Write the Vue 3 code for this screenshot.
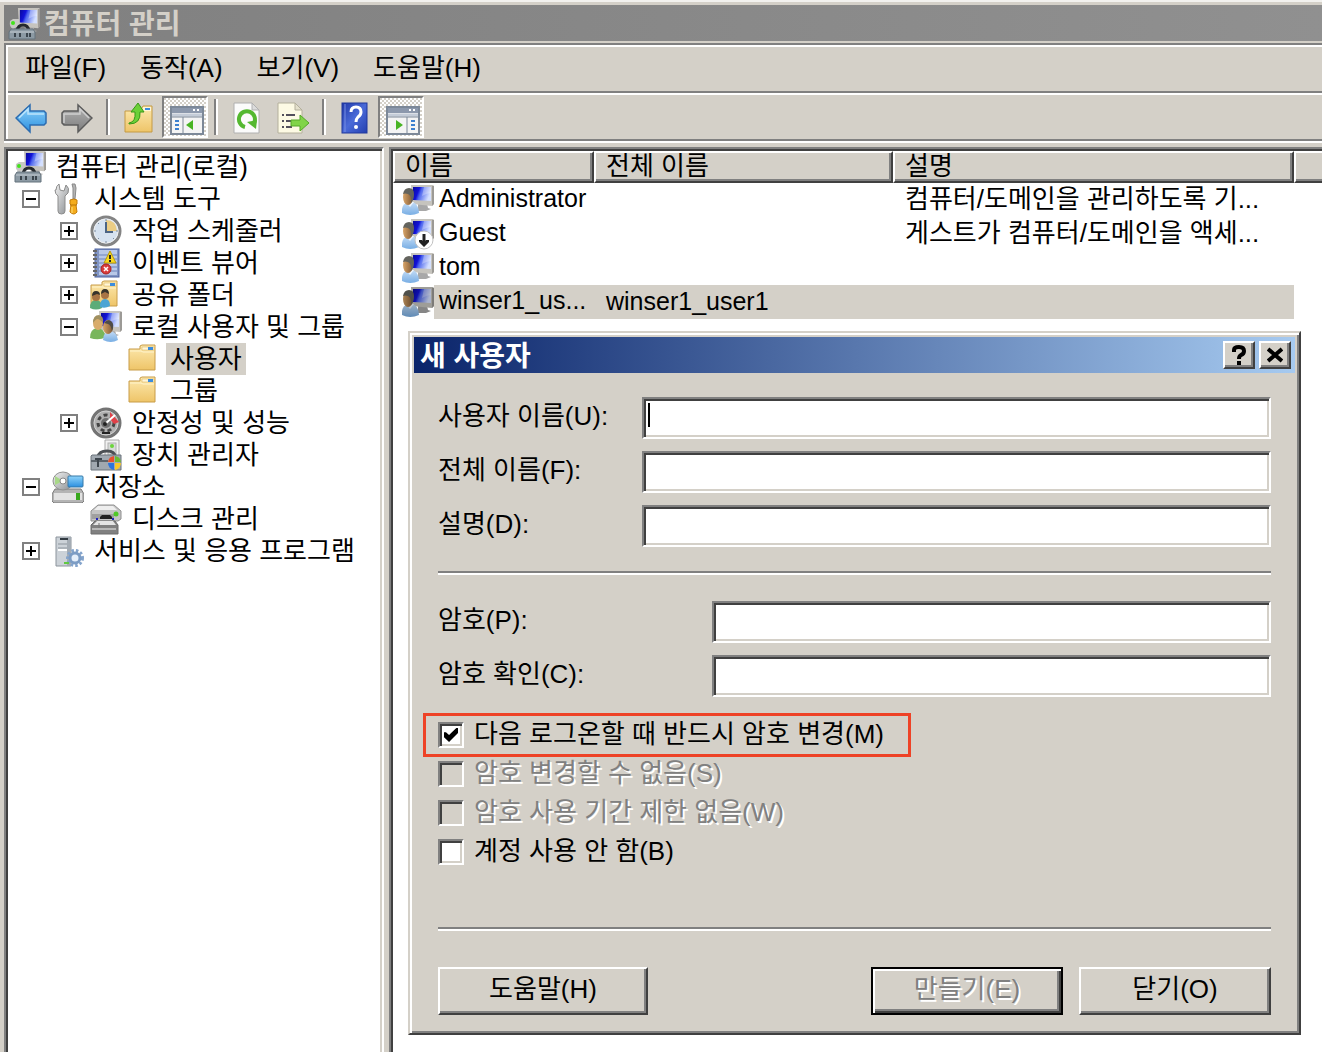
<script setup>
import { ref } from 'vue'

const menus = ['파일(F)', '동작(A)', '보기(V)', '도움말(H)']

const tools = [
  { icon: 'back', label: '뒤로' },
  { icon: 'forward', label: '앞으로' },
  { separator: true },
  { icon: 'up', label: '한 수준 위로' },
  { icon: 'tree-pane', label: '콘솔 트리 표시/숨기기', pressed: true },
  { separator: true },
  { icon: 'refresh', label: '새로 고침' },
  { icon: 'export', label: '목록 내보내기' },
  { separator: true },
  { icon: 'help', label: '도움말' },
  { icon: 'action-pane', label: '작업 창 표시/숨기기', pressed: true },
]

const tree = [
  { depth: 0, icon: 'computer', text: '컴퓨터 관리(로컬)' },
  { depth: 1, icon: 'tools', text: '시스템 도구', box: 'minus' },
  { depth: 2, icon: 'clock', text: '작업 스케줄러', box: 'plus' },
  { depth: 2, icon: 'events', text: '이벤트 뷰어', box: 'plus' },
  { depth: 2, icon: 'shared', text: '공유 폴더', box: 'plus' },
  { depth: 2, icon: 'group', text: '로컬 사용자 및 그룹', box: 'minus' },
  { depth: 3, icon: 'folder', text: '사용자', selected: true },
  { depth: 3, icon: 'folder', text: '그룹' },
  { depth: 2, icon: 'gauge', text: '안정성 및 성능', box: 'plus' },
  { depth: 2, icon: 'device', text: '장치 관리자' },
  { depth: 1, icon: 'storage', text: '저장소', box: 'minus' },
  { depth: 2, icon: 'disk', text: '디스크 관리' },
  { depth: 1, icon: 'services', text: '서비스 및 응용 프로그램', box: 'plus' },
]

const users = [
  { name: 'Administrator', full: '', desc: '컴퓨터/도메인을 관리하도록 기...', icon: 'user' },
  { name: 'Guest', full: '', desc: '게스트가 컴퓨터/도메인을 액세...', icon: 'user-off' },
  { name: 'tom', full: '', desc: '', icon: 'user' },
  { name: 'winser1_us...', full: 'winser1_user1', desc: '', icon: 'user', selected: true },
]

const identity = [
  { id: 'user-name', label: '사용자 이름(U):', focused: true },
  { id: 'full-name', label: '전체 이름(F):' },
  { id: 'description', label: '설명(D):' },
]
const passwords = [
  { id: 'password', label: '암호(P):' },
  { id: 'confirm', label: '암호 확인(C):' },
]
const options = ref([
  { id: 'must-change', label: '다음 로그온할 때 반드시 암호 변경(M)', checked: true, marked: true },
  { id: 'cannot-change', label: '암호 변경할 수 없음(S)', checked: false, disabled: true },
  { id: 'never-expires', label: '암호 사용 기간 제한 없음(W)', checked: false, disabled: true },
  { id: 'account-off', label: '계정 사용 안 함(B)', checked: false },
])
</script>

<template>
  <svg class="sprite" aria-hidden="true">
    <defs>
      <linearGradient id="g-screen" x1="0" y1="0" x2="1" y2="0.3">
        <stop offset="0" stop-color="#0a0a9c" /><stop offset="0.35" stop-color="#1212d8" />
        <stop offset="0.5" stop-color="#5068ee" /><stop offset="1" stop-color="#d4e0ff" />
      </linearGradient>
      <linearGradient id="g-folder" x1="0" y1="0" x2="0" y2="1">
        <stop offset="0" stop-color="#fdeab0" /><stop offset="1" stop-color="#eec468" />
      </linearGradient>
      <linearGradient id="g-blue" x1="0" y1="0" x2="0" y2="1">
        <stop offset="0" stop-color="#8fd4fa" /><stop offset="1" stop-color="#2c8fe0" />
      </linearGradient>
      <linearGradient id="g-gray" x1="0" y1="0" x2="0" y2="1">
        <stop offset="0" stop-color="#b4b4b4" /><stop offset="1" stop-color="#7c7c7c" />
      </linearGradient>
      <linearGradient id="g-metal" x1="0" y1="0" x2="1" y2="1">
        <stop offset="0" stop-color="#f2f2f2" /><stop offset="1" stop-color="#8a8e92" />
      </linearGradient>
      <linearGradient id="g-help" x1="0" y1="0" x2="1" y2="1">
        <stop offset="0" stop-color="#2038a8" /><stop offset="0.5" stop-color="#4a6ad8" /><stop offset="1" stop-color="#2440b0" />
      </linearGradient>
      <linearGradient id="g-shirt" x1="0" y1="0" x2="0" y2="1">
        <stop offset="0" stop-color="#c4dcf6" /><stop offset="1" stop-color="#78aee4" />
      </linearGradient>
      <linearGradient id="g-head" x1="0" y1="0" x2="1" y2="0">
        <stop offset="0" stop-color="#d8a468" /><stop offset="1" stop-color="#7e5834" />
      </linearGradient>
    </defs>

    <symbol id="i-monitor" viewBox="0 0 24 28">
      <path d="M8 19h9l1 4 3 1-5 2H6l2-2z" fill="#a8a8a8" />
      <path d="M1 0h22l1 1v18l-2 2-20-2z" fill="#c6c4be" />
      <path d="M22 1l2 0v18l-2 2z" fill="#9c9a96" />
      <path d="M3 2h18v14l-18-1z" fill="url(#g-screen)" />
      <path d="M14 2h7v6q-4 0-9 3z" fill="#fff" opacity=".3" />
    </symbol>
    <symbol id="i-computer" viewBox="0 0 32 32">
      <svg x="9" y="0" width="23" height="27"><use href="#i-monitor" /></svg>
      <path d="M2 13q-1 6 3 8l6-3V11H5z" fill="#c8c8c4" />
      <circle cx="5" cy="15" r="2" fill="#42e21c" />
      <path d="M9 23q1-6 6-6t6 6" fill="none" stroke="#25292d" stroke-width="3" />
      <path d="M3 21h22l2 3v7H1v-7z" fill="#8c9aa4" stroke="#65727c" />
      <path d="M2 24h24" stroke="#c4ccd2" stroke-width="1" />
      <path d="M7 25v4M12 25v4M19 25v4M22 25v4" stroke="#3b454d" stroke-width="2" />
    </symbol>
    <symbol id="i-user" viewBox="0 0 32 32">
      <svg x="8" y="1" width="24" height="28"><use href="#i-monitor" /></svg>
      <path d="M0 29q-1-9 6-11h5q6 3 6 11-9 4-17 0z" fill="url(#g-shirt)" />
      <path d="M4 18l4 5 4-5z" fill="#eef5fc" />
      <ellipse cx="6" cy="13" rx="5" ry="8" fill="url(#g-head)" />
      <path d="M1 10q1-6 6-6 5 0 5 6 0 6-3 9 1-7-3-9-3-1-5 0z" fill="#64645e" />
    </symbol>
    <symbol id="i-user-off" viewBox="0 0 32 32">
      <use href="#i-user" />
      <circle cx="22" cy="22" r="9" fill="#fff" stroke="#c2c2c2" />
      <path d="M22 16v8" stroke="#222" stroke-width="3" />
      <path d="M17 22h3l2 2 2-2h3v2l-5 5-5-5z" fill="#222" />
    </symbol>
    <symbol id="i-group" viewBox="0 0 32 32">
      <svg x="8" y="0" width="24" height="28"><use href="#i-monitor" /></svg>
      <path d="M0 27q0-9 7-10 7 0 9 9-7 4-16 1z" fill="#78b65c" />
      <ellipse cx="8" cy="12" rx="5" ry="7" fill="#d8ac6c" />
      <path d="M3 12q0-8 6-8 5 1 4 8-3-4-6-4-2 1-4 4z" fill="#a09060" />
      <path d="M13 29q0-8 7-9 7 1 8 9-7 4-15 0z" fill="url(#g-shirt)" />
      <ellipse cx="18" cy="16" rx="5" ry="7" fill="url(#g-head)" />
      <path d="M14 12q3-4 7-2 4 3 1 10-1-6-4-7z" fill="#4e4c48" />
    </symbol>
    <symbol id="i-tools" viewBox="0 0 32 32">
      <path d="M4 7q0-4 3-6l1 6 4 1 2-6q4 3 2 8l-3 3v15q0 3-3.500 3t-3.500-3V13q-3-2-3-6z" fill="url(#g-metal)" stroke="#8c8c8c" />
      <path d="M20 1h3l1 4-1 11h-2V5z" fill="#b4b4b4" stroke="#888" />
      <path d="M18 17q4-2 7 0v4l-1 1 1 7q-3 4-7 0l1-7-1-1z" fill="#f4ac1c" stroke="#c47c08" />
      <path d="M18 22h7" stroke="#b87408" />
      <path d="M20 24v6" stroke="#ffe07c" stroke-width="1" />
    </symbol>
    <symbol id="i-clock" viewBox="0 0 32 32">
      <circle cx="16" cy="16" r="14" fill="#d6e2f0" stroke="#848484" stroke-width="3" />
      <circle cx="16" cy="16" r="12" fill="none" stroke="#eee" stroke-width="1" />
      <path d="M16 16V5q10 0 11 11z" fill="#eccd84" />
      <path d="M16 7v10h7" fill="none" stroke="#4c6484" stroke-width="2" />
      <path d="M16 4v2M16 26v2M4 16h2M26 16h2M8 8l1 1M24 24l-1-1M8 24l1-1" stroke="#7c8ca0" stroke-width="1" />
    </symbol>
    <symbol id="i-events" viewBox="0 0 32 32">
      <rect x="5" y="2" width="24" height="28" fill="#8094c4" stroke="#4c62a0" />
      <path d="M9 3h18v25H9z" fill="#b8c8e8" />
      <path d="M9 8h18M9 12h18M9 16h18M9 20h18M9 24h18" stroke="#6c84bc" stroke-width="1" />
      <path d="M3 4h4M3 8h4M3 12h4M3 16h4M3 20h4M3 24h4M3 28h4" stroke="#666" stroke-width="2" />
      <path d="M20 4l6 12H14z" fill="#f8d820" stroke="#b89808" />
      <path d="M20 8v4M20 13v2" stroke="#222" stroke-width="2" />
      <circle cx="16" cy="22" r="5" fill="#d83c3c" stroke="#a82020" />
      <path d="M14 20l4 4M18 20l-4 4" stroke="#fff" stroke-width="1.500" />
    </symbol>
    <symbol id="i-folder" viewBox="0 0 32 32">
      <path d="M1 6h11V3l2-1h13v25H1z" fill="url(#g-folder)" stroke="#c89c48" />
      <path d="M14 4h12v3H14z" fill="#fff6d8" stroke="#d4ac58" stroke-width=".5" />
      <path d="M20 4h5v3h-5z" fill="#3c8cdc" />
      <path d="M2 8h11l2 1h11" fill="none" stroke="#fff4cc" />
    </symbol>
    <symbol id="i-shared" viewBox="0 0 32 32">
      <use href="#i-folder" />
      <path d="M0 29q0-8 6-8t6 8q-6 3-12 0z" fill="#5cac78" />
      <path d="M10 28q0-8 5-8t5 7q-5 3-10 1z" fill="#4ca4d4" />
      <circle cx="6" cy="18" r="4" fill="#a87444" />
      <circle cx="15" cy="16" r="4" fill="#a87444" />
      <path d="M2 17q0-5 4-5t4 4l-3-1zM11 15q0-5 4-5t4 5l-4-2z" fill="#38342c" />
    </symbol>
    <symbol id="i-gauge" viewBox="0 0 32 32">
      <circle cx="16" cy="16" r="14" fill="#8c8c8c" stroke="#747474" stroke-width="3" />
      <circle cx="16" cy="16" r="12" fill="#b0b0b0" stroke="#d0d0d0" stroke-width="1" />
      <circle cx="16" cy="16" r="8" fill="none" stroke="#444" stroke-width="3" stroke-dasharray="4 3" />
      <path d="M20 5l9 10-5 2-4-5z" fill="#e04048" />
      <circle cx="16" cy="16" r="5" fill="#707070" />
      <path d="M15 17L25 8" stroke="#fff" stroke-width="2" />
      <circle cx="15" cy="17" r="2" fill="#222" />
      <path d="M12 26h8" stroke="#222" stroke-width="2" />
    </symbol>
    <symbol id="i-device" viewBox="0 0 32 32">
      <path d="M15 1h14v18H15z" fill="#f2f2f2" stroke="#a8a8a8" />
      <rect x="18" y="4" width="8" height="12" fill="#d8dcd8" stroke="#b0b0b0" />
      <circle cx="22" cy="7" r="2" fill="#6cd43c" />
      <path d="M8 18q1-6 9-6t8 6" fill="none" stroke="#4c5054" stroke-width="3" />
      <path d="M2 16h29v15H1V17z" fill="#a0a8b0" stroke="#6c747c" />
      <path d="M1 22h17" stroke="#5c646c" stroke-width="2" />
      <path d="M8 20v8M5 20h7" stroke="#3c444c" stroke-width="2" />
      <path d="M18 23a7 7 0 0 1 6-6v6z" fill="#e8502c" />
      <path d="M25 17a7 7 0 0 1 6 6h-6z" fill="#6cbc30" />
      <path d="M18 24h6v7a7 7 0 0 1-6-7z" fill="#2c74dc" />
      <path d="M25 24h6a7 7 0 0 1-6 7z" fill="#f8c828" />
    </symbol>
    <symbol id="i-storage" viewBox="0 0 32 32">
      <path d="M3 18h26l3 5v7l-2 2H2l-2-2v-7z" fill="#b4b4b4" stroke="#7c7c7c" />
      <path d="M2 22h28v7H2z" fill="#e2e2e2" />
      <path d="M24 22h4v7h-4z" fill="#38a81c" />
      <ellipse cx="11" cy="10" rx="10" ry="9" fill="url(#g-metal)" stroke="#909090" />
      <path d="M3 5l8 5-8 4z" fill="#a8d888" />
      <circle cx="11" cy="10" r="3" fill="#fff" stroke="#888" />
      <rect x="16" y="5" width="15" height="11" rx="1" fill="url(#g-blue)" stroke="#3478a8" />
    </symbol>
    <symbol id="i-disk" viewBox="0 0 32 32">
      <path d="M1 8l7-6h16l7 6v8l-3 2H1z" fill="#c4c4c4" stroke="#909090" />
      <path d="M8 3h15l4 4H4z" fill="#eee" />
      <path d="M2 11h22v5H2z" fill="#a0a0a0" />
      <path d="M10 14l2-2h8l2 2v2H10z" fill="#222" />
      <circle cx="26" cy="11" r="2.500" fill="#50c828" />
      <path d="M7 15v2M23 15v2" stroke="#2020c0" stroke-width="2" />
      <path d="M5 18h20l3 4v9H1v-9z" fill="#808080" stroke="#6c6c6c" />
      <path d="M7 18h16l3 4H3z" fill="#e4e4e4" />
      <path d="M2 26h24" stroke="#b8b8b8" stroke-width="2" />
      <path d="M9 20v5" stroke="#777" stroke-width="1" />
    </symbol>
    <symbol id="i-services" viewBox="0 0 32 32">
      <path d="M4 2h15v29H4z" fill="#ccd2d8" stroke="#8c949c" />
      <path d="M15 2h4v29h-4z" fill="#a4acb4" />
      <path d="M8 4h8" stroke="#333b43" stroke-width="2" />
      <path d="M6 9h9M6 13h9" stroke="#8c949c" stroke-width="1" />
      <path d="M6 15h9" stroke="#fff" stroke-width="2" />
      <circle cx="23" cy="23" r="7.500" fill="none" stroke="#84a4cc" stroke-width="3" stroke-dasharray="2.500 2" />
      <circle cx="23" cy="23" r="5" fill="#e4eefa" stroke="#7c9cc4" stroke-width="3" />
      <path d="M12 28h5" stroke="#60c840" stroke-width="2" />
    </symbol>

    <symbol id="i-back" viewBox="0 0 32 32">
      <path d="M1 16L15 3v6h14l2 2v10l-2 2H15v7z" fill="url(#g-blue)" stroke="#2c6cb0" stroke-width="1.500" />
      <path d="M4 16l9-9v5h16" fill="none" stroke="#bce4fc" stroke-width="1.500" />
    </symbol>
    <symbol id="i-forward" viewBox="0 0 32 32">
      <path d="M31 16L17 3v6H3l-2 2v10l2 2h14v7z" fill="url(#g-gray)" stroke="#5c5c5c" stroke-width="1.500" />
      <path d="M3 21v-9h16V7l9 9" fill="none" stroke="#cfcfcf" stroke-width="1.500" />
    </symbol>
    <symbol id="i-up" viewBox="0 0 32 32">
      <path d="M2 9h15l3-5h9v26H2z" fill="url(#g-folder)" stroke="#c49a44" />
      <path d="M20 5h8v4h-8z" fill="#fff6d8" />
      <path d="M22 6h5v2h-5z" fill="#3c8cdc" />
      <path d="M6 21q7-1 6-11H8l7-9 6 9h-4q1 12-11 12z" fill="#6cd038" stroke="#389818" />
    </symbol>
    <symbol id="i-tree-pane" viewBox="0 0 36 30">
      <rect x="1" y="2" width="32" height="27" fill="#f4f4f4" stroke="#7c8898" stroke-width="2" />
      <path d="M2 3h30v5H2z" fill="#8c98ac" />
      <path d="M23 5h2M27 5h2" stroke="#fff" stroke-width="2" />
      <path d="M2 10h30" stroke="#c4ccd8" stroke-width="3" />
      <path d="M13 12v16M2 12h30" stroke="#7c8898" stroke-width="1" />
      <path d="M5 16h4M5 20h4M5 24h4" stroke="#3c80d0" stroke-width="2" />
      <path d="M23 15v10l-7-5z" fill="#48b424" />
    </symbol>
    <symbol id="i-action-pane" viewBox="0 0 36 30">
      <rect x="1" y="2" width="32" height="27" fill="#f4f4f4" stroke="#7c8898" stroke-width="2" />
      <path d="M2 3h30v5H2z" fill="#8c98ac" />
      <path d="M23 5h2M27 5h2" stroke="#fff" stroke-width="2" />
      <path d="M2 10h30" stroke="#c4ccd8" stroke-width="3" />
      <path d="M21 12v16M2 12h30" stroke="#7c8898" stroke-width="1" />
      <path d="M25 16h4M25 20h4M25 24h4" stroke="#3c80d0" stroke-width="2" />
      <path d="M10 15v10l7-5z" fill="#48b424" />
    </symbol>
    <symbol id="i-refresh" viewBox="0 0 32 32">
      <path d="M3 1h18l7 7v23H3z" fill="#fbfbfb" stroke="#b0b0b0" />
      <path d="M21 1v7h7z" fill="#dcdcdc" stroke="#b0b0b0" />
      <path d="M14 25a8 8 0 1 1 9-4" fill="none" stroke="#54b830" stroke-width="4" />
      <path d="M16 20l10-2-1 9z" fill="#54b830" />
    </symbol>
    <symbol id="i-export" viewBox="0 0 32 32">
      <path d="M1 1h17l7 7v23H1z" fill="#fdfae4" stroke="#b4b09c" />
      <path d="M18 1v7h7z" fill="#e4e0cc" stroke="#b4b09c" />
      <path d="M5 13h2M5 19h2M5 25h2M9 13h9M9 19h6M9 25h6" stroke="#54505c" stroke-width="2" />
      <path d="M14 18h9v-5l9 8-9 8v-5h-9z" fill="#80d448" stroke="#54a828" />
    </symbol>
    <symbol id="i-help" viewBox="0 0 32 32">
      <rect x="3" y="1" width="25" height="30" fill="url(#g-help)" stroke="#20389c" />
      <path d="M6 2v28" stroke="#7890e4" stroke-width="1" />
      <path d="M12 10q0-5 5-5t5 5q0 3-3 5-2 2-2 5" fill="none" stroke="#fff" stroke-width="3" />
      <circle cx="17" cy="25" r="2" fill="#fff" />
    </symbol>
  </svg>

  <div class="window">
    <header class="titlebar">
      <svg class="icon"><use href="#i-computer" /></svg>
      <h1>컴퓨터 관리</h1>
    </header>

    <div class="bars">
      <nav class="menubar">
        <button v-for="m in menus" :key="m" type="button">{{ m }}</button>
      </nav>
      <div class="toolbar">
        <template v-for="(t, i) in tools" :key="i">
          <span v-if="t.separator" class="sep"></span>
          <button v-else type="button" :class="{ pressed: t.pressed }" :aria-label="t.label">
            <svg class="icon" :class="{ wide: t.pressed }"><use :href="'#i-' + t.icon" /></svg>
          </button>
        </template>
      </div>
    </div>

    <main class="panes">
      <aside class="tree-pane">
        <ul class="tree">
          <li v-for="n in tree" :key="n.text" :class="'depth-' + n.depth">
            <button v-if="n.box" type="button" class="box" :class="n.box" :aria-label="n.text"></button>
            <svg class="icon"><use :href="'#i-' + n.icon" /></svg>
            <span class="node" :class="{ selected: n.selected }">{{ n.text }}</span>
          </li>
        </ul>
      </aside>

      <section class="list-pane">
        <table class="users">
          <colgroup>
            <col class="c-name" /><col class="c-full" /><col class="c-desc" /><col />
          </colgroup>
          <thead>
            <tr><th>이름</th><th>전체 이름</th><th>설명</th><th></th></tr>
          </thead>
          <tbody>
            <tr v-for="u in users" :key="u.name" :class="{ selected: u.selected }">
              <td class="name">
                <div class="cell">
                  <svg class="icon"><use :href="'#i-' + u.icon" /></svg>
                  <span>{{ u.name }}</span>
                </div>
              </td>
              <td class="full">{{ u.full }}</td>
              <td class="desc">{{ u.desc }}</td>
              <td></td>
            </tr>
          </tbody>
        </table>

        <form class="dialog" role="dialog" aria-labelledby="dialog-title" @submit.prevent>
          <div class="caption">
            <h2 id="dialog-title">새 사용자</h2>
            <button type="button" aria-label="도움말">
              <svg viewBox="0 0 16 20"><path d="M3 7V5q0-3 5-3t5 4q0 3-3 4-2 1-2 4" fill="none" stroke="#000" stroke-width="4" /><path d="M6 16h4v4H6z" /></svg>
            </button>
            <button type="button" aria-label="닫기">
              <svg viewBox="0 0 16 20"><path d="M1 4l14 12M15 4L1 16" stroke="#000" stroke-width="4" /></svg>
            </button>
          </div>
          <div class="body">
            <div class="fields">
              <div v-for="f in identity" :key="f.id" class="field">
                <label :for="f.id">{{ f.label }}</label>
                <input :id="f.id" type="text" :class="{ focused: f.focused }" />
              </div>
            </div>
            <hr />
            <div class="fields secret">
              <div v-for="f in passwords" :key="f.id" class="field">
                <label :for="f.id">{{ f.label }}</label>
                <input :id="f.id" type="password" />
              </div>
            </div>
            <div class="options">
              <div v-for="o in options" :key="o.id" class="option" :class="{ off: o.disabled, marked: o.marked }">
                <input :id="o.id" v-model="o.checked" type="checkbox" :disabled="o.disabled" />
                <label :for="o.id">{{ o.label }}</label>
              </div>
            </div>
            <hr />
            <div class="actions">
              <button type="button" class="help">도움말(H)</button>
              <button type="submit" class="create" disabled>만들기(E)</button>
              <button type="button">닫기(O)</button>
            </div>
          </div>
        </form>
      </section>
    </main>
  </div>
</template>

<style>
body {
  margin: 0;
  background: #d4d0c8;
}
</style>

<style scoped>
.sprite {
  position: absolute;
  width: 0;
  height: 0;
}
.window,
.window button,
.window input {
  font-family: "Liberation Sans", "Noto Sans CJK KR", sans-serif;
  font-size: 26px;
  line-height: 32px;
  color: #000;
}
.window {
  box-sizing: border-box;
  display: flex;
  flex-direction: column;
  min-height: 100vh;
  padding: 3px 0 0 4px;
  border-top: 2px solid #f2f1ee;
  background: #d4d0c8;
  overflow: hidden;
}
button {
  box-sizing: border-box;
  margin: 0;
  padding: 0;
  border: 0;
  background: none;
}
.icon {
  flex: none;
  width: 32px;
  height: 32px;
}
h1,
h2 {
  margin: 0;
  padding-top: 4px;
  font-size: 28px;
  line-height: 32px;
  font-weight: 700;
}

.titlebar {
  display: flex;
  align-items: center;
  gap: 4px;
  height: 36px;
  padding-left: 4px;
  background: linear-gradient(90deg, #808080, #909090);
}
.titlebar .icon {
  padding-top: 2px;
}
.titlebar h1 {
  color: #d4d0c8;
}

.bars {
  margin-top: 2px;
  border: solid #808080;
  border-width: 2px 0 2px 2px;
  box-shadow: inset 2px 2px #fff, 0 2px #fff;
}
.menubar {
  display: flex;
  align-items: center;
  gap: 34px;
  height: 42px;
  margin-left: 2px;
  padding: 2px 0 2px 17px;
  border-bottom: 2px solid #808080;
}
.toolbar {
  display: flex;
  align-items: center;
  height: 44px;
  margin-left: 2px;
  border-top: 2px solid #fff;
}
.toolbar button {
  display: flex;
  align-items: center;
  justify-content: center;
  width: 46px;
  height: 42px;
  padding-top: 2px;
}
.toolbar button.pressed {
  padding: 6px 0 0 6px;
  border: 2px solid;
  border-color: #808080 #fff #fff #808080;
  background: repeating-conic-gradient(#fff 0 25%, #d4d0c8 0 50%) 0 0 / 4px 4px;
}
.toolbar .icon.wide {
  width: 36px;
  height: 30px;
}
.sep {
  box-sizing: border-box;
  width: 4px;
  height: 36px;
  margin: 0 6px;
  border-right: 2px solid #fff;
  border-left: 2px solid #808080;
}

.panes {
  display: flex;
  flex: 1;
  gap: 5px;
  margin-top: 6px;
}
.tree-pane {
  box-sizing: border-box;
  flex: none;
  width: 380px;
  padding: 2px 4px 0 2px;
  border: solid;
  border-width: 2px 2px 0;
  border-color: #808080 #fff #fff #808080;
  box-shadow: inset 2px 2px #404040, inset -2px 0 #d4d0c8;
  background: #fff;
}
.tree {
  margin: 0;
  padding: 0;
  list-style: none;
}
.tree li {
  display: flex;
  align-items: center;
  height: 32px;
  white-space: nowrap;
}
.tree .depth-0 { padding-left: 6px; }
.tree .depth-1 { padding-left: 14px; }
.tree .depth-2 { padding-left: 52px; }
.tree .depth-3 { padding-left: 90px; }
.tree li > .icon {
  margin-right: 6px;
}
.tree .depth-1 > .icon:first-child,
.tree .depth-2 > .icon:first-child,
.tree .depth-3 > .icon:first-child {
  margin-left: 30px;
}
.box {
  flex: none;
  width: 18px;
  height: 18px;
  margin-right: 12px;
  border: 2px solid #808080;
  background: linear-gradient(#000, #000) center / 10px 2px no-repeat;
}
.box.plus {
  background:
    linear-gradient(#000, #000) center / 10px 2px no-repeat,
    linear-gradient(#000, #000) center / 2px 10px no-repeat;
}
.node {
  padding: 0 4px;
}
.node.selected {
  background: #d4d0c8;
}

.list-pane {
  position: relative;
  flex: 1;
  min-width: 0;
  min-height: 890px;
  padding: 2px 0 0 2px;
  border: solid #808080;
  border-width: 2px 0 0 2px;
  box-shadow: inset 2px 2px #404040;
  background: #fff;
}
.users {
  width: 100%;
  border-spacing: 0;
  table-layout: fixed;
}
.c-name { width: 201px; }
.c-full { width: 299px; }
.c-desc { width: 401px; }
.users th {
  box-sizing: border-box;
  height: 32px;
  padding: 0 0 2px 10px;
  border: 2px solid;
  border-color: #fff #404040 #404040 #fff;
  box-shadow: inset -2px -2px #808080;
  background: #d4d0c8;
  font-weight: 400;
  line-height: 26px;
  text-align: left;
}
.users th:last-child {
  border-right: 0;
  box-shadow: inset 0 -2px #808080;
}
.users td {
  height: 32px;
  padding: 0 0 2px 12px;
  white-space: nowrap;
}
.users .name {
  padding: 0 0 0 9px;
}
.name,
.full {
  font-size: 25px;
}
.cell {
  display: flex;
  align-items: center;
}
.cell span {
  flex: 1;
  padding: 0 0 3px 5px;
  line-height: 31px;
}
.selected .cell span,
.selected .full,
.selected .desc {
  background: #d4d0c8;
}
.selected .icon {
  filter: brightness(0.8);
}

.dialog {
  position: absolute;
  top: 182px;
  right: 21px;
  left: 17px;
  padding: 4px;
  border: 2px solid;
  border-color: #d4d0c8 #404040 #404040 #d4d0c8;
  box-shadow: inset 2px 2px #fff, inset -2px -2px #808080;
  background: #d4d0c8;
}
.caption {
  display: flex;
  align-items: center;
  gap: 4px;
  height: 36px;
  padding: 0 4px 0 6px;
  background: linear-gradient(90deg, #0a246a, #a6caf0);
}
.caption h2 {
  flex: 1;
  color: #fff;
}
.caption button {
  display: flex;
  align-items: center;
  justify-content: center;
  width: 32px;
  height: 28px;
}
.caption svg {
  width: 16px;
  height: 20px;
}
.caption button,
.actions button {
  border: 2px solid;
  border-color: #fff #404040 #404040 #fff;
  box-shadow: inset -2px -2px #808080;
  background: #d4d0c8;
}
.body {
  padding: 24px 24px 14px;
}
.fields {
  display: flex;
  flex-direction: column;
  gap: 12px;
}
.field {
  display: flex;
}
.field label {
  flex: none;
  width: 204px;
  line-height: 38px;
}
.secret label {
  width: 274px;
}
.field input {
  box-sizing: border-box;
  flex: 1;
  min-width: 0;
  height: 42px;
  padding: 0 6px;
  border: 2px solid;
  border-color: #808080 #fff #fff #808080;
  border-radius: 0;
  box-shadow: inset 2px 2px #404040, inset -2px -2px #d4d0c8;
  background: #fff;
  outline: 0;
}
.field input.focused {
  background: linear-gradient(#000, #000) 4px 4px / 2px 24px no-repeat #fff;
}
hr {
  height: 0;
  margin: 24px 0 26px;
  border: solid;
  border-width: 2px 0;
  border-color: #808080 #fff #fff;
}
.options {
  display: flex;
  flex-direction: column;
  align-items: flex-start;
  gap: 13px;
  padding: 25px 0 38px;
}
.option {
  display: flex;
  align-items: center;
  gap: 10px;
  height: 26px;
}
.option.marked {
  outline: 3px solid #ee4226;
  outline-offset: 6px;
  padding: 0 18px 0 6px;
  margin-left: -6px;
}
.option label {
  padding-bottom: 3px;
}
.option input {
  appearance: none;
  display: grid;
  place-items: center;
  box-sizing: border-box;
  width: 26px;
  height: 26px;
  margin: 0;
  border: 2px solid;
  border-color: #808080 #fff #fff #808080;
  box-shadow: inset 2px 2px #404040, inset -2px -2px #d4d0c8;
  background: #fff;
}
.option input:checked::before {
  content: "";
  width: 14px;
  height: 14px;
  background: #000;
  clip-path: polygon(0 30%, 14% 30%, 36% 50%, 88% 0, 100% 0, 100% 36%, 36% 100%, 0 66%);
}
.off input {
  background: #d4d0c8;
}
.off label,
.actions button:disabled {
  color: #808080;
  text-shadow: 2px 2px #fff;
}
.actions {
  display: flex;
  gap: 16px;
  margin-top: 36px;
}
.actions button {
  width: 192px;
  height: 48px;
  padding-bottom: 4px;
}
.actions .help {
  width: 210px;
  margin-right: auto;
}
.actions .create {
  border-color: #000;
  box-shadow: inset 2px 2px #fff, inset -2px -2px #404040, inset -4px -4px #808080;
}
</style>
